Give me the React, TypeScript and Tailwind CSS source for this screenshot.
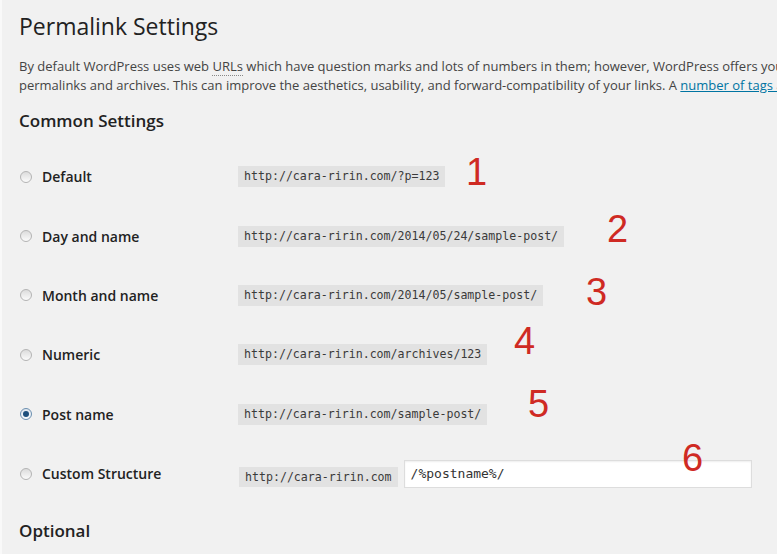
const rows = [
  { label: "Default", url: "http://cara-ririn.com/?p=123" },
  { label: "Day and name", url: "http://cara-ririn.com/2014/05/24/sample-post/" },
  { label: "Month and name", url: "http://cara-ririn.com/2014/05/sample-post/" },
  { label: "Numeric", url: "http://cara-ririn.com/archives/123" },
  { label: "Post name", url: "http://cara-ririn.com/sample-post/", checked: true },
];

// red annotation digits drawn over the screenshot
const marks = [
  { n: "1", left: 466, top: 153 },
  { n: "2", left: 607, top: 210 },
  { n: "3", left: 586, top: 273 },
  { n: "4", left: 514, top: 322 },
  { n: "5", left: 528, top: 385 },
  { n: "6", left: 682, top: 439 },
];

function Radio({ checked }: { checked?: boolean }) {
  return (
    <span
      className={
        "ml-[1px] flex h-[12px] w-[12px] items-center justify-center rounded-full border bg-gradient-to-b " +
        (checked
          ? "border-[#6a8fb0] from-[#dfe6ee] to-[#f7f9fb]"
          : "border-[#b4b4b4] from-[#dcdcdc] to-[#fbfbfb]")
      }
    >
      {checked && <span className="h-[6px] w-[6px] rounded-full bg-[#1d4f7c]" />}
    </span>
  );
}

function Code({ children }: { children: React.ReactNode }) {
  return (
    <code className="whitespace-nowrap bg-[#e2e2e2] px-[6px] py-[3px] font-['DejaVu_Sans_Mono',monospace] text-[11.6px] leading-[15px] text-[#3a3a3a]">
      {children}
    </code>
  );
}

export default function App() {
  return (
    <div className="relative h-[554px] w-[777px] overflow-hidden bg-[#f1f1f1] font-['Open_Sans',sans-serif] text-[#444] shadow-[inset_2px_0_0_#f9f9f9]">
      <div className="pl-[19px]">
        <h1 className="pt-[12px] text-[23px] font-normal leading-[29px] text-[#222]">
          Permalink Settings
        </h1>

        <div className="mt-[16px] whitespace-nowrap text-[13px] leading-[19px] text-[#444]">
          <p>
            By default WordPress uses web{" "}
            <abbr className="border-b border-dotted border-[#888] no-underline">URLs</abbr>{" "}
            which have question marks and lots of numbers in them; however, WordPress offers you
            the ability to create a custom URL structure for your
          </p>
          <p>
            permalinks and archives. This can improve the aesthetics, usability, and
            forward-compatibility of your links. A{" "}
            <a className="text-[#0074a2] underline">number of tags are available</a>, and here
            are some examples to get you started.
          </p>
        </div>

        <h2 className="mt-[15px] text-[17px] font-semibold leading-[22px] text-[#222]">
          Common Settings
        </h2>

        <div className="mt-[15px]">
          {rows.map((r) => (
            <div key={r.label} className="flex h-[59.4px] items-center">
              <div className="w-[23px]">
                <Radio checked={r.checked} />
              </div>
              <span className="w-[196px] text-[14px] font-semibold text-[#222]">{r.label}</span>
              <Code>{r.url}</Code>
            </div>
          ))}
          <div className="flex h-[59.4px] items-center">
            <div className="w-[23px]">
              <Radio />
            </div>
            <span className="w-[197px] text-[14px] font-semibold text-[#222]">
              Custom Structure
            </span>
            <span className="mt-[3px]">
              <Code>http://cara-ririn.com</Code>
            </span>
            <div className="ml-[6px] flex h-[28px] w-[348px] items-center border border-[#dddddd] bg-white px-[6px] font-['DejaVu_Sans_Mono',monospace] text-[13px] text-[#333] shadow-[inset_0_1px_2px_rgba(0,0,0,0.07)]">
              /%postname%/
            </div>
          </div>
        </div>

        <h2 className="mt-[17px] text-[17px] font-semibold leading-[22px] text-[#222]">
          Optional
        </h2>
      </div>

      {marks.map((m) => (
        <span
          key={m.n}
          className="absolute font-['Liberation_Sans',Arial,sans-serif] text-[38px] leading-[38px] text-[#cf2a23]"
          style={{ left: m.left, top: m.top }}
        >
          {m.n}
        </span>
      ))}
    </div>
  );
}
